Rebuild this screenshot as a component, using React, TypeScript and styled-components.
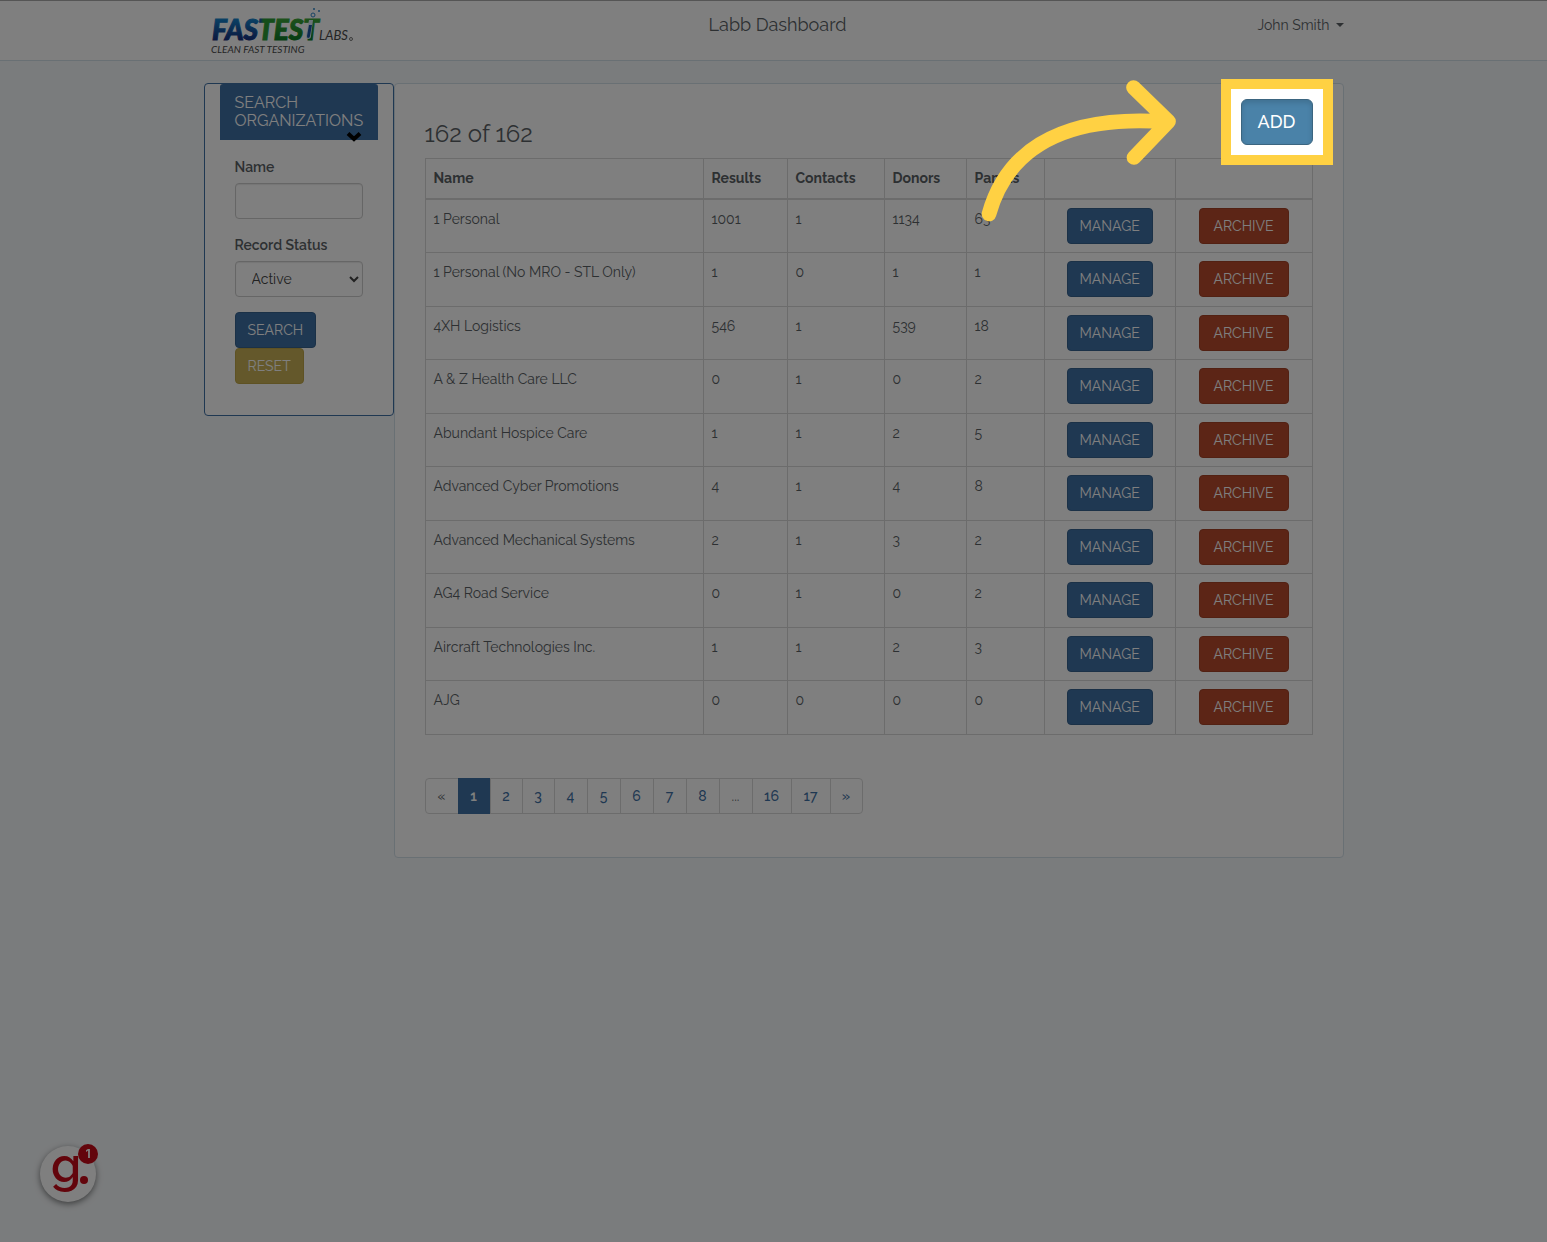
import React from 'react';
import styled, { createGlobalStyle } from 'styled-components';

const color = {
  page: '#f5f8fa',
  text: '#5a6165',
  line: '#d9d9d9',
  panelLine: '#d3e0e9',
  blue: '#3f70a4',
  blueDark: '#37638f',
  red: '#b84a2c',
  redDark: '#a44227',
  gold: '#c8b156',
  goldDark: '#bda548',
  steel: '#4a82a8',
  highlight: '#ffd143',
};

const GlobalStyle = createGlobalStyle`
  * { box-sizing: border-box; }
  body {
    margin: 0;
    background: ${color.page};
    color: ${color.text};
    font: 14px/22px Raleway, Inter, "Open Sans", sans-serif;
  }
  button, input, select { font: inherit; }
`;

const Screen = styled.div`
  min-height: 100vh;
  display: flow-root;
`;

const Header = styled.header`
  background: #fff;
  border-top: 1px solid #aaa;
  border-bottom: 1px solid ${color.panelLine};
`;

const HeaderInner = styled.div`
  display: grid;
  grid-template-columns: 1fr auto 1fr;
  max-width: 1140px;
  height: 59px;
  margin: 0 auto;
`;

const Brand = styled.a`
  display: block;
  justify-self: start;
  padding: 4px;
`;

const LogoArt = styled.svg`
  display: block;
  overflow: visible;
`;

const Title = styled.h1`
  margin: 0;
  padding: 12px 0 12px 8px;
  font-size: 18px;
  line-height: 24px;
  font-weight: 400;
`;

const UserMenu = styled.button`
  display: flex;
  align-items: center;
  justify-self: end;
  align-self: start;
  gap: 6px;
  margin-top: 13px;
  padding: 0;
  border: 0;
  background: none;
  color: inherit;
`;

const Caret = styled.span`
  border: 4px solid transparent;
  border-top-color: currentColor;
  border-bottom: 0;
`;

const Layout = styled.div`
  display: grid;
  grid-template-columns: 1fr 5fr;
  align-items: start;
  max-width: 1140px;
  margin: 22px auto;
`;

const SearchPanel = styled.aside`
  padding: 0 15px 31px;
  background: #fff;
  border: 1px solid ${color.blue};
  border-radius: 4px;
`;

const PanelHeading = styled.h2`
  position: relative;
  margin: 0;
  padding: 10px 14px 10px 15px;
  background: ${color.blue};
  border-radius: 3px 3px 0 0;
  color: #fff;
  font-size: 16px;
  line-height: 18px;
  font-weight: 400;
  text-transform: uppercase;
`;

const Chevron = styled.svg`
  position: absolute;
  right: 16px;
  bottom: -2px;
  width: 16px;
  height: 12px;
`;

const SearchForm = styled.form`
  display: flex;
  flex-direction: column;
  align-items: flex-start;
  padding: 16px 15px 0;
`;

const Field = styled.div`
  display: flex;
  flex-direction: column;
  gap: 5px;
  width: 100%;
  margin-bottom: 15px;
`;

const Label = styled.label`
  font-weight: 600;
`;

const Input = styled.input`
  width: 100%;
  height: 36px;
  padding: 6px 12px;
  background: #fff;
  border: 1px solid #ccc;
  border-radius: 4px;
  box-shadow: inset 0 1px 1px rgba(0, 0, 0, 0.08);
  color: #444;
`;

const Select = styled(Input).attrs({ as: 'select' })``;

const Button = styled.button<{ $bg: string; $edge: string }>`
  height: 36px;
  padding: 6px 12px;
  background: ${(p) => p.$bg};
  border: 1px solid ${(p) => p.$edge};
  border-radius: 4px;
  color: #fff;
  text-transform: uppercase;
  white-space: nowrap;
`;

const Main = styled.main`
  min-width: 0;
  padding: 15px 30px 43px;
  background: #fff;
  border: 1px solid ${color.panelLine};
  border-radius: 4px;
`;

const MainTop = styled.div`
  display: flex;
  align-items: flex-end;
  justify-content: space-between;
  height: 59px;
`;

const Count = styled.h2`
  margin: 0 0 10px;
  font-size: 24px;
  line-height: 28px;
  font-weight: 400;
`;

const Spotlight = styled.div`
  position: relative;
  align-self: flex-start;
`;

const SpotlightFrame = styled.div`
  position: absolute;
  inset: -20px;
  z-index: 10;
  border: 10px solid ${color.highlight};
  box-shadow: 0 0 0 4000px rgba(0, 0, 0, 0.5);
  pointer-events: none;
`;

const Arrow = styled.svg`
  position: absolute;
  top: -20px;
  right: 133px;
  z-index: 11;
  width: 200px;
  height: 146px;
  pointer-events: none;
`;

const AddButton = styled.button`
  display: block;
  width: 72px;
  height: 46px;
  padding: 0;
  background: ${color.steel};
  border: 1px solid #3b6580;
  border-radius: 6px;
  box-shadow: inset 0 3px 5px rgba(0, 0, 0, 0.125);
  color: #fff;
  font-size: 18px;
  font-weight: 500;
`;

const Table = styled.table`
  width: 100%;
  table-layout: fixed;
  border-collapse: collapse;
  margin-bottom: 43px;

  th, td {
    padding: 8px;
    border: 1px solid ${color.line};
    text-align: left;
    vertical-align: top;
  }
  th {
    height: 40px;
    border-bottom-width: 2px;
    font-weight: 700;
  }
  tr:nth-child(even) td { padding-bottom: 9px; }
`;

const Col = styled.col<{ $w?: number }>`
  width: ${(p) => (p.$w ? `${p.$w}px` : 'auto')};
`;

const Action = styled.div`
  display: flex;
  justify-content: center;
`;

const ManageButton = styled(Button)`
  width: 86px;
`;

const ArchiveButton = styled(Button)`
  width: 90px;
`;

const Pagination = styled.ul`
  display: flex;
  width: max-content;
  margin: 0;
  padding: 0;
  border: 1px solid ${color.line};
  border-radius: 4px;
  list-style: none;
`;

const Page = styled.li<{ $w: number }>`
  width: ${(p) => p.$w}px;
  height: 34px;
  line-height: 34px;
  text-align: center;

  & + & { border-left: 1px solid ${color.line}; }
  a { display: block; color: ${color.blue}; font-weight: 500; text-decoration: none; }
  a[aria-current] {
    margin: -1px 0 -1px -1px;
    padding: 1px 0;
    background: ${color.blue};
    color: #fff;
    font-weight: 600;
  }
`;

const HelpButton = styled.button`
  position: fixed;
  left: 40px;
  bottom: 40px;
  width: 56px;
  height: 56px;
  padding: 0;
  background: #fff;
  border: 0;
  border-radius: 50%;
  box-shadow: 0 2px 6px rgba(0, 0, 0, 0.5);
`;

const HelpMark = styled.svg`
  display: block;
  overflow: visible;
`;

const HelpBadge = styled.span`
  position: absolute;
  top: -2px;
  right: -2px;
  width: 20px;
  height: 20px;
  background: #c70a18;
  border-radius: 50%;
  color: #fff;
  font-family: Inter, sans-serif;
  font-size: 12px;
  line-height: 20px;
  font-weight: 700;
`;

type Org = [string, number, number, number, number];

const orgs: Org[] = [
  ['1 Personal', 1001, 1, 1134, 63],
  ['1 Personal (No MRO - STL Only)', 1, 0, 1, 1],
  ['4XH Logistics', 546, 1, 539, 18],
  ['A & Z Health Care LLC', 0, 1, 0, 2],
  ['Abundant Hospice Care', 1, 1, 2, 5],
  ['Advanced Cyber Promotions', 4, 1, 4, 8],
  ['Advanced Mechanical Systems', 2, 1, 3, 2],
  ['AG4 Road Service', 0, 1, 0, 2],
  ['Aircraft Technologies Inc.', 1, 1, 2, 3],
  ['AJG', 0, 0, 0, 0],
];

const pages = ['«', '1', '2', '3', '4', '5', '6', '7', '8', '...', '16', '17', '»'];

const pageWidth = (p: string) => {
  if (p.length === 2) return 39;
  return ['«', '1', '2', '3', '»'].includes(p) ? 32 : 33;
};

const Logo = () => (
  <LogoArt width="148" height="52" viewBox="0 0 148 52" role="img" aria-label="Fastest Labs">
    <defs>
      <linearGradient id="blue" gradientUnits="userSpaceOnUse" x1="0" y1="13" x2="0" y2="35">
        <stop offset="0" stopColor="#1585cc" />
        <stop offset="1" stopColor="#16307f" />
      </linearGradient>
      <linearGradient id="turn" gradientUnits="userSpaceOnUse" x1="46" y1="0" x2="62" y2="0">
        <stop offset="0.4" stopColor="#175aa6" />
        <stop offset="0.6" stopColor="#2b9a35" />
      </linearGradient>
      <linearGradient id="green" gradientUnits="userSpaceOnUse" x1="0" y1="13" x2="0" y2="35">
        <stop offset="0" stopColor="#3da63a" />
        <stop offset="1" stopColor="#0d7a27" />
      </linearGradient>
    </defs>
    <g fontFamily="Lato, sans-serif" fontStyle="italic">
      <text x="4" y="35" fontSize="28" fontWeight="900" strokeWidth="1">
        <tspan fill="url(#blue)" stroke="url(#blue)">FAS</tspan>
        <tspan fill="url(#turn)" stroke="url(#turn)">T</tspan>
        <tspan fill="url(#green)" stroke="url(#green)">EST</tspan>
      </text>
      <text x="111" y="35" fontSize="13" fill="#4a4a4a">LABS</text>
      <text x="3" y="48" fontSize="10" fill="#4a4a4a">CLEAN FAST TESTING</text>
    </g>
    <path d="M101 15 L98 31 Q98 34 100 34 Q103 34 103 31 L105 15 Z" fill="#d8e8f5" />
    <path d="M101 20 L99 31 Q99 33 100 33 Q102 33 102 31 L104 20 Z" fill="#1c55a5" />
    <circle cx="105" cy="10" r="2" fill="none" stroke="#2e86c8" />
    <circle cx="106" cy="4" r="1" fill="#2e86c8" />
    <circle cx="111" cy="6" r="1" fill="#2e86c8" />
    <circle cx="143" cy="34" r="1.5" fill="none" stroke="#777" />
  </LogoArt>
);

export default function App() {
  return (
    <Screen>
      <GlobalStyle />
      <Header>
        <HeaderInner>
          <Brand href="#">
            <Logo />
          </Brand>
          <Title>Labb Dashboard</Title>
          <UserMenu type="button">
            John Smith <Caret />
          </UserMenu>
        </HeaderInner>
      </Header>

      <Layout>
        <SearchPanel>
          <PanelHeading>
            Search Organizations
            <Chevron viewBox="0 0 16 12" aria-hidden="true">
              <path d="M2 3.5 L8 9 L14 3.5" fill="none" stroke="#000" strokeWidth="4" />
            </Chevron>
          </PanelHeading>
          <SearchForm onSubmit={(e) => e.preventDefault()}>
            <Field>
              <Label htmlFor="name">Name</Label>
              <Input id="name" type="text" />
            </Field>
            <Field>
              <Label htmlFor="status">Record Status</Label>
              <Select id="status">
                <option>Active</option>
              </Select>
            </Field>
            <Button type="submit" $bg={color.blue} $edge={color.blueDark}>Search</Button>
            <Button type="reset" $bg={color.gold} $edge={color.goldDark}>Reset</Button>
          </SearchForm>
        </SearchPanel>

        <Main>
          <MainTop>
            <Count>162 of 162</Count>
            <Spotlight>
              <AddButton type="button">ADD</AddButton>
              <SpotlightFrame />
              <Arrow viewBox="980 79 200 146" aria-hidden="true">
                <path
                  d="M989 214 C1004 160 1050 113 1168 122 M1133.5 87.5 L1168.5 121.5 L1134 157.5"
                  fill="none"
                  stroke={color.highlight}
                  strokeWidth="14.7"
                  strokeLinecap="round"
                  strokeLinejoin="round"
                />
              </Arrow>
            </Spotlight>
          </MainTop>

          <Table>
            <colgroup>
              <Col />
              <Col $w={84} />
              <Col $w={97} />
              <Col $w={82} />
              <Col $w={78} />
              <Col $w={131} />
              <Col $w={137} />
            </colgroup>
            <thead>
              <tr>
                <th>Name</th>
                <th>Results</th>
                <th>Contacts</th>
                <th>Donors</th>
                <th>Panels</th>
                <th aria-label="Manage" />
                <th aria-label="Archive" />
              </tr>
            </thead>
            <tbody>
              {orgs.map(([name, ...counts]) => (
                <tr key={name}>
                  <td>{name}</td>
                  {counts.map((n, i) => (
                    <td key={i}>{n}</td>
                  ))}
                  <td>
                    <Action>
                      <ManageButton type="button" $bg={color.blue} $edge={color.blueDark}>Manage</ManageButton>
                    </Action>
                  </td>
                  <td>
                    <Action>
                      <ArchiveButton type="button" $bg={color.red} $edge={color.redDark}>Archive</ArchiveButton>
                    </Action>
                  </td>
                </tr>
              ))}
            </tbody>
          </Table>

          <nav aria-label="Pages">
            <Pagination>
              {pages.map((p) => (
                <Page key={p} $w={pageWidth(p)}>
                  {p === '«' || p === '...' ? (
                    <span>{p}</span>
                  ) : (
                    <a href="#" aria-current={p === '1' ? 'page' : undefined}>{p}</a>
                  )}
                </Page>
              ))}
            </Pagination>
          </nav>
        </Main>
      </Layout>

      <HelpButton type="button" aria-label="Help, 1 new">
        <HelpMark width="56" height="56" viewBox="0 0 56 56">
          <text x="11" y="36" fontFamily="Raleway, sans-serif" fontSize="48" fontWeight="600" fill="#c70a18">g</text>
          <circle cx="44" cy="34" r="4" fill="#c70a18" />
        </HelpMark>
        <HelpBadge>1</HelpBadge>
      </HelpButton>
    </Screen>
  );
}
